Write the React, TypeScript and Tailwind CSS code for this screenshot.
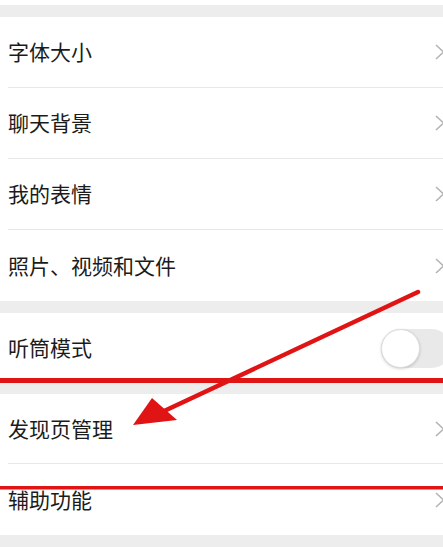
import React from "react";

const font = { fontFamily: '"Noto Sans CJK SC", "Noto Sans", sans-serif' };

const Chevron = () => (
  <svg width="12" height="20" viewBox="0 0 12 20" className="shrink-0">
    <polyline points="2,3 9.5,10 2,17" fill="none" stroke="#b3b3b3" strokeWidth="1.6" />
  </svg>
);

const Toggle = () => (
  <div className="relative h-[39px] w-[70px] shrink-0 rounded-full bg-[#e9e9e9]">
    <div className="absolute left-0 top-0 h-[39px] w-[39px] rounded-full border border-[#dcdcdc] bg-white shadow-[0_1px_3px_rgba(0,0,0,0.18)]" />
  </div>
);

interface RowProps {
  label: string;
  last?: boolean;
  h?: string;
  right?: React.ReactNode;
}

const Row = ({ label, last, h = "h-[71px]", right }: RowProps) => (
  <div className={`flex ${h} items-stretch pl-2`}>
    <div
      className={`flex flex-1 items-center justify-between ${
        last ? "" : "border-b border-[#e8e8e8]"
      }`}
    >
      <span className="text-[21px] text-[#1b1b1b]" style={font}>
        {label}
      </span>
      {right ?? (
        <div className="-mr-[3px] flex items-center">
          <Chevron />
        </div>
      )}
    </div>
  </div>
);

export default function App() {
  return (
    <div className="relative h-[547px] w-[443px] overflow-hidden bg-[#ededed]">
      <div className="h-[5px] bg-white" />
      <div className="h-[12px]" />
      <div className="bg-white">
        <Row label="字体大小" />
        <Row label="聊天背景" />
        <Row label="我的表情" />
        <Row label="照片、视频和文件" last />
      </div>
      <div className="h-[12px]" />
      <div className="bg-white">
        <Row
          label="听筒模式"
          last
          h="h-[70px]"
          right={
            <div className="-mr-[8px] flex items-center">
              <Toggle />
            </div>
          }
        />
      </div>
      <div className="h-[11px]" />
      <div className="bg-white">
        <Row label="发现页管理" h="h-[70px]" />
        <Row label="辅助功能" last />
      </div>

      {/* red annotation */}
      <svg
        className="pointer-events-none absolute inset-0"
        width="443"
        height="547"
        viewBox="0 0 443 547"
      >
        <rect x="0" y="378" width="443" height="5" fill="#e01414" />
        <rect x="0" y="486" width="443" height="3.5" fill="#e01414" />
        <line x1="418" y1="292" x2="162" y2="412" stroke="#e01414" strokeWidth="4.5" strokeLinecap="round" />
        <polygon points="133,425 152,398 177,420" fill="#e01414" />
      </svg>
    </div>
  );
}
